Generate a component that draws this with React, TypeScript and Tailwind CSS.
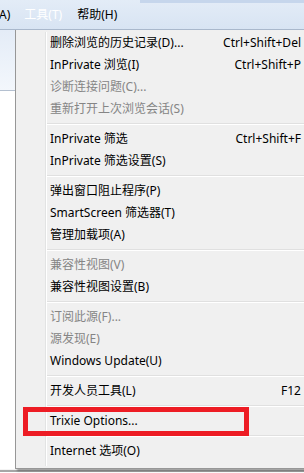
const font = { fontFamily: '"Segoe UI", "Noto Sans", "Noto Sans CJK SC", sans-serif' };

type Item = { label: string; key?: string; off?: boolean } | 'sep';

const items: Item[] = [
  { label: '删除浏览的历史记录(D)...', key: 'Ctrl+Shift+Del' },
  { label: 'InPrivate 浏览(I)', key: 'Ctrl+Shift+P' },
  { label: '诊断连接问题(C)...', off: true },
  { label: '重新打开上次浏览会话(S)', off: true },
  'sep',
  { label: 'InPrivate 筛选', key: 'Ctrl+Shift+F' },
  { label: 'InPrivate 筛选设置(S)' },
  'sep',
  { label: '弹出窗口阻止程序(P)' },
  { label: 'SmartScreen 筛选器(T)' },
  { label: '管理加载项(A)' },
  'sep',
  { label: '兼容性视图(V)', off: true },
  { label: '兼容性视图设置(B)' },
  'sep',
  { label: '订阅此源(F)...', off: true },
  { label: '源发现(E)', off: true },
  { label: 'Windows Update(U)' },
  'sep',
  { label: '开发人员工具(L)', key: 'F12' },
  'sep',
  { label: 'Trixie Options...' },
  'sep',
  { label: 'Internet 选项(O)' },
];

export default function App() {
  return (
    <div className="relative w-[304px] h-[473px] overflow-hidden bg-white text-[12px] text-black" style={font}>
      {/* menu bar */}
      <div className="relative h-[30px] flex items-center pt-[1px] bg-gradient-to-b from-[#e3ecf7] to-[#d8e4f3] border-b border-[#a9b8cc]">
        <div className="absolute top-0 left-[140px] right-0 h-[3px] bg-[#c6d6ec]" />
        <span className="-ml-[1px]">A)</span>
        <span className="ml-[14px] text-white">工具(T)</span>
        <span className="ml-[15px]">帮助(H)</span>
      </div>

      <div className="flex">
        {/* left strip behind menu */}
        <div className="w-[15px] flex flex-col">
          <div className="h-[61px] bg-gradient-to-b from-[#e4ecf7] to-[#f3f7fc] border-b border-[#b4c0d0]" />
          <div className="h-[378px] bg-white" />
        </div>

        {/* dropdown */}
        <div className="flex-1 flex bg-[#f0f0f0] border-l border-b border-[#979797] shadow-[2px_2px_2px_rgba(0,0,0,0.35)] py-[2px]">
          <div className="w-[29px] shrink-0" />
          <div className="w-[2px] shrink-0 border-l border-[#e2e3e3] border-r border-r-white" />
          <div className="flex-1 flex flex-col">
            {items.map((it, i) =>
              it === 'sep' ? (
                <div key={i} className="h-[8px] flex flex-col justify-center">
                  <div className="h-[1px] bg-[#e0e0e0]" />
                  <div className="h-[1px] bg-white" />
                </div>
              ) : (
                <div
                  key={i}
                  className={`h-[22px] flex items-center justify-between pl-[3px] pr-[3px] whitespace-nowrap ${it.off ? 'text-[#858585]' : 'text-black'}`}
                >
                  <span>{it.label}</span>
                  {it.key && <span>{it.key}</span>}
                </div>
              )
            )}
          </div>
        </div>
      </div>

      {/* bottom frame */}
      <div className="h-[1px] bg-[#f4f4f4]" />
      <div className="h-[2px] bg-[#a6a6a6]" />

      {/* red highlight annotation */}
      <div className="absolute left-[23px] top-[407px] w-[226px] h-[29px] border-[5px] border-[#ed1c24]" />
    </div>
  );
}
